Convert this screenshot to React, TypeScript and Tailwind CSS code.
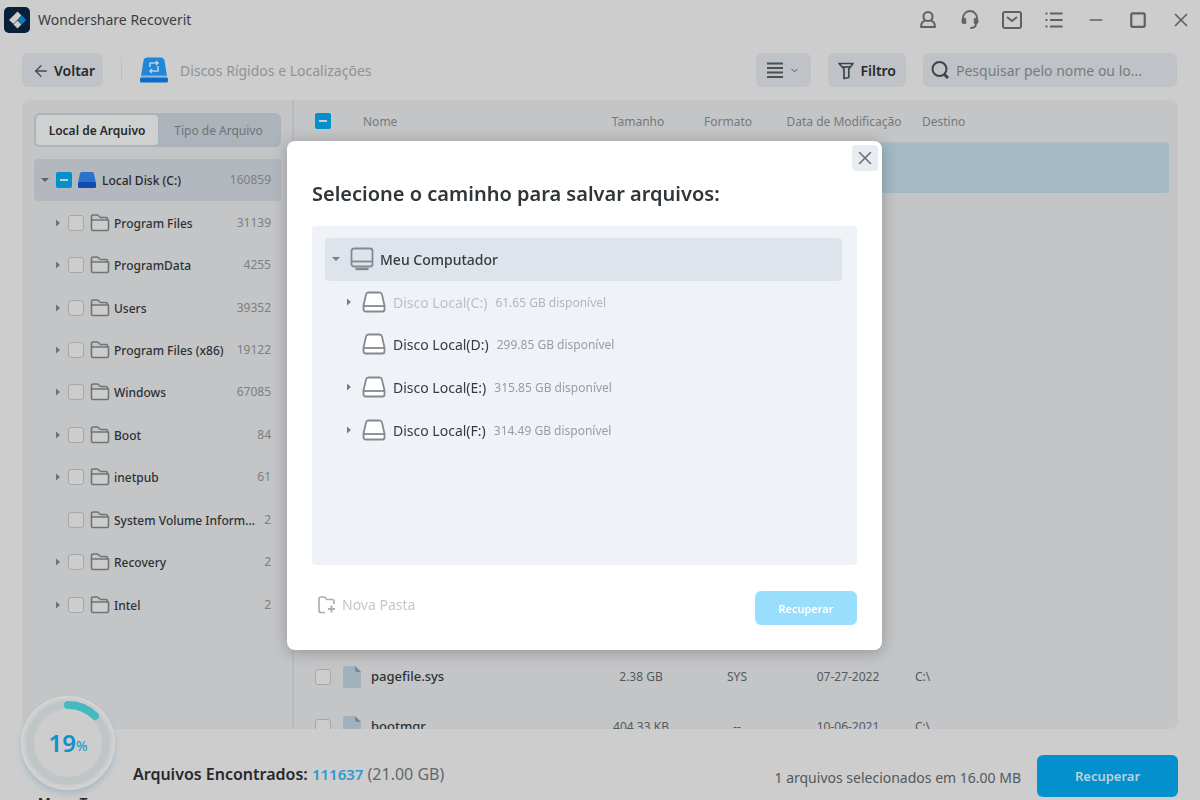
import React from 'react';
import { ArrowLeft, ChevronDown, Minus, Square, X } from 'lucide-react';

const folders = [
  { name: 'Program Files', count: 31139, expandable: true },
  { name: 'ProgramData', count: 4255, expandable: true },
  { name: 'Users', count: 39352, expandable: true },
  { name: 'Program Files (x86)', count: 19122, expandable: true },
  { name: 'Windows', count: 67085, expandable: true },
  { name: 'Boot', count: 84, expandable: true },
  { name: 'inetpub', count: 61, expandable: true },
  { name: 'System Volume Inform...', count: 2, expandable: false },
  { name: 'Recovery', count: 2, expandable: true },
  { name: 'Intel', count: 2, expandable: true },
];

const files = [
  { name: 'pagefile.sys', size: '2.38 GB', format: 'SYS', date: '07-27-2022', path: 'C:\\' },
  { name: 'bootmgr', size: '404.33 KB', format: '--', date: '10-06-2021', path: 'C:\\' },
];

const disks = [
  { name: 'Disco Local(C:)', free: '61.65 GB disponível', expandable: true, disabled: true },
  { name: 'Disco Local(D:)', free: '299.85 GB disponível', expandable: false, disabled: false },
  { name: 'Disco Local(E:)', free: '315.85 GB disponível', expandable: true, disabled: false },
  { name: 'Disco Local(F:)', free: '314.49 GB disponível', expandable: true, disabled: false },
];

const Logo = () => (
  <svg className="h-[26px] w-[26px]" viewBox="0 0 26 26">
    <rect width="26" height="26" rx="5" fill="#08203a" />
    <path d="M13.500 4.500L17.500 8.500 9.500 17 5 13z" fill="#cdcdcd" />
    <path d="M13.500 13.500l4 4-4 4-4-4z" fill="#cdcdcd" />
    <path d="M18 8.500l4 4.500-4 4.500-4-4.500z" fill="#0a7fc0" />
  </svg>
);

const RecoveryDisk = () => (
  <svg className="h-[26px] w-7" viewBox="0 0 28 26">
    <path d="M7 .5h14a3.500 3.500 0 0 1 3.400 2.600L27 19H1L3.600 3.100A3.500 3.500 0 0 1 7 .5z" fill="#1f86d8" />
    <path d="M.8 18.500h26.400v2H.8z" fill="#8fb9d6" />
    <rect y="20.500" width="28" height="5" rx="1.500" fill="#0a6ccc" />
    <path d="M10 10V6h7M18 9v5h-7M16 4l2 2-2 2M12 12l-2 2 2 2" fill="none" stroke="#b5d3e6" strokeWidth="1.600" />
  </svg>
);

const Caret = ({ open = false, className = '' }: { open?: boolean; className?: string }) => (
  <svg className={`h-2 w-2 shrink-0 ${className}`} viewBox="0 0 8 8" fill="currentColor">
    {open ? <path d="M0 2h8L4 6z" /> : <path d="M2 0.500L6 4 2 7.500z" />}
  </svg>
);

const Folder = () => (
  <svg className="h-[18px] w-5 shrink-0" viewBox="0 0 20 18" fill="none" stroke="#6f7476" strokeWidth="1.600" strokeLinejoin="round">
    <path d="M1.500 6v9a1.500 1.500 0 0 0 1.500 1.500h14a1.500 1.500 0 0 0 1.500-1.500V6z" fill="#cdcdcd" />
    <path d="M1.500 6.500V2.500A1.500 1.500 0 0 1 3 1h4.500l3 2.500H16A1.500 1.500 0 0 1 17.500 5v1" />
  </svg>
);

const Drive = () => (
  <svg className="h-[22px] w-6 shrink-0" viewBox="0 0 24 22" fill="none" stroke="#83898e" strokeWidth="1.800" strokeLinejoin="round">
    <path d="M6.500 1.500h11a2.500 2.500 0 0 1 2.400 1.900L22.500 14.500v4a2 2 0 0 1-2 2h-17a2 2 0 0 1-2-2v-4L4.100 3.400A2.500 2.500 0 0 1 6.500 1.500z" fill="#fff" />
    <path d="M1.500 15h21" />
  </svg>
);

const Monitor = () => (
  <svg className="h-6 w-6 shrink-0" viewBox="0 0 24 24" fill="none" stroke="#83898e" strokeWidth="1.800">
    <rect x="1.500" y="1.500" width="21" height="18" rx="2.500" />
    <path d="M2 14.500h20" />
    <path d="M5.500 22h13" strokeWidth="2.400" />
  </svg>
);

const FileIcon = () => (
  <svg className="h-[22px] w-[18px] shrink-0" viewBox="0 0 18 22">
    <path d="M2 0h10l6 6v14a2 2 0 0 1-2 2H2a2 2 0 0 1-2-2V2a2 2 0 0 1 2-2z" fill="#a2b2bd" />
    <path d="M12 0l6 6h-4a2 2 0 0 1-2-2z" fill="#74899a" />
  </svg>
);

const box =
  'block size-4 shrink-0 appearance-none rounded-[3px] border border-[#a5a8aa] bg-[#cdcdcd]';

// checkbox in the "partly selected" state
const PartialBox = ({ label }: { label: string }) => (
  <span className="relative block size-4 shrink-0">
    <input type="checkbox" aria-label={label} className="block size-4 appearance-none rounded-[2px] bg-[#0390cc]" />
    <span className="pointer-events-none absolute top-[7px] left-1 h-0.5 w-2 bg-[#cdcdcd]" />
  </span>
);

const TitleBar = () => (
  <header className="flex h-10 shrink-0 items-center justify-between pr-2 pl-1">
    <div className="flex items-center gap-2">
      <Logo />
      <h1 className="text-sm text-[#3c3f41]">Wondershare Recoverit</h1>
    </div>
    <nav className="flex items-center gap-[22px] text-[#5d6365]">
      <button aria-label="Conta" className="size-5">
        <svg viewBox="0 0 20 20" fill="none" stroke="currentColor" strokeWidth="2" strokeLinejoin="round">
          <circle cx="10" cy="6.500" r="4.500" />
          <path d="M7 10.500c-2.500 1-4 3-4 6.500h14c0-3.500-1.500-5.500-4-6.500" />
        </svg>
      </button>
      <button aria-label="Suporte" className="size-5">
        <svg viewBox="0 0 20 20" fill="none" stroke="currentColor" strokeWidth="1.900" strokeLinecap="round">
          <path d="M3 9V8a7 7 0 0 1 14 0v1" />
          <path d="M3.500 8.500h2.300v5H3.500A1.500 1.500 0 0 1 2 12v-2a1.500 1.500 0 0 1 1.500-1.500zM16.500 8.500h-2.300v5h2.300A1.500 1.500 0 0 0 18 12v-2a1.500 1.500 0 0 0-1.500-1.500z" fill="currentColor" strokeWidth="0.800" />
          <path d="M16 13.500c0 3-2 4.500-5 4.500" />
        </svg>
      </button>
      <button aria-label="Mensagens" className="size-5">
        <svg viewBox="0 0 20 20" fill="none" stroke="currentColor" strokeWidth="2">
          <rect x="1" y="2" width="18" height="16" rx="2" />
          <path d="M5 7l5 4 5-4" />
        </svg>
      </button>
      <button aria-label="Menu" className="size-5">
        <svg viewBox="0 0 20 20" fill="none" stroke="currentColor" strokeWidth="2">
          <path d="M6 3.500h12.500M6 10h12.500M6 16.500h12.500M1.500 3.500h2M1.500 10h2M1.500 16.500h2" />
        </svg>
      </button>
      <button aria-label="Minimizar" className="flex size-5 items-center justify-center"><Minus size={22} strokeWidth={2} /></button>
      <button aria-label="Maximizar" className="flex size-5 items-center justify-center"><Square size={18} strokeWidth={3} /></button>
      <button aria-label="Fechar"><X size={22} strokeWidth={1.9} /></button>
    </nav>
  </header>
);

const Toolbar = () => (
  <div className="mt-[13px] flex h-[34px] shrink-0 items-center pr-[23px] pl-[22px]">
    <button className="flex h-full items-center gap-1 rounded-md bg-[#bfc3c7] pt-0.5 pr-2 pl-2.5 text-sm font-semibold text-[#26292b]">
      <ArrowLeft size={18} strokeWidth={1.7} className="text-[#444a4d]" />
      Voltar
    </button>
    <div className="mx-[18px] h-6 w-px bg-[#bdbfc1]" />
    <RecoveryDisk />
    <span className="ml-3 pt-0.5 text-sm text-[#8f9395]">Discos Rígidos e Localizações</span>
    <button aria-label="Modo de exibição" className="ml-auto flex h-full items-center gap-1.5 rounded-md bg-[#bfc3c7] px-[11px] text-[#4b5052]">
      <svg className="h-4 w-4" viewBox="0 0 16 16" stroke="currentColor" strokeWidth="1.800">
        <path d="M0 1.500h16M0 6h16M0 10.500h16M0 15h16" />
      </svg>
      <ChevronDown size={11} />
    </button>
    <button className="ml-[17px] flex h-full items-center gap-1.5 rounded-md bg-[#bfc3c7] px-2.5 pt-0.5 text-sm font-semibold text-[#26292b]">
      <svg className="h-[18px] w-4" viewBox="0 0 16 18" fill="none" stroke="#3f4547" strokeWidth="1.700" strokeLinejoin="round">
        <path d="M1 1.500h14l-4.200 5.500v8.500l-4.800 1V7z" />
        <path d="M4 5h8" />
      </svg>
      Filtro
    </button>
    <label className="ml-[17px] flex h-full w-[254px] items-center gap-[7px] rounded-md bg-[#bfc3c7] px-2">
      <svg className="h-[18px] w-[18px] shrink-0" viewBox="0 0 18 18" fill="none" stroke="#3f4547" strokeWidth="2">
        <circle cx="8.500" cy="8" r="7" />
        <path d="M13.500 13.500l3.500 3.500" strokeWidth="3" />
      </svg>
      <input
        aria-label="Pesquisar"
        placeholder="Pesquisar pelo nome ou lo..."
        className="w-full bg-transparent pt-0.5 text-sm outline-none placeholder:text-[#777b7d]"
      />
    </label>
  </div>
);

const Sidebar = () => (
  <aside className="w-[272px] shrink-0 border-r-2 border-[#b8babd] pt-[13px] pr-[11px] pl-3">
    <div className="flex h-[34px] rounded-md bg-[#adb3bb] p-0.5 text-xs">
      <button className="w-[122px] rounded bg-[#cfd0d0] pt-0.5 font-semibold text-[#26292b]">Local de Arquivo</button>
      <button className="flex-1 pt-0.5 text-[#6d7377]">Tipo de Arquivo</button>
    </div>
    <ul className="mt-3 grid h-[467px] auto-rows-fr grid-cols-1 text-xs">
      <li className="flex items-center rounded bg-[#b3b8bf] pr-2.5 pl-[7px]">
        <Caret open className="mr-[7px] text-[#5d6365]" />
        <PartialBox label="Local Disk (C:)" />
        <svg className="mx-1.5 h-4 w-[18px]" viewBox="0 0 18 16">
          <path d="M4 0h10a2 2 0 0 1 2 1.600L18 11H0L2 1.600A2 2 0 0 1 4 0z" fill="#2b72cb" />
          <rect y="10" width="18" height="6" rx="1.500" fill="#124bb0" />
        </svg>
        <span className="pt-0.5 font-medium text-[#26292b]">Local Disk (C:)</span>
        <span className="ml-auto text-[#7b8083]">160859</span>
      </li>
      {folders.map((folder) => (
        <li key={folder.name} className="flex items-center pr-2.5 pl-5">
          <Caret className={folder.expandable ? 'mr-1.5 text-[#6d7274]' : 'invisible mr-1.5'} />
          <input type="checkbox" aria-label={folder.name} className={box} />
          <span className="mr-1 ml-1.5">
            <Folder />
          </span>
          <span className="pt-0.5 font-medium whitespace-nowrap text-[#2e3133]">{folder.name}</span>
          <span className="ml-auto text-[#7b8083]">{folder.count}</span>
        </li>
      ))}
    </ul>
  </aside>
);

const FileTable = () => (
  <div className="min-w-0 flex-1 overflow-hidden pr-[9px]">
    <table className="w-full table-fixed border-collapse text-xs">
      <colgroup>
        <col className="w-[69px]" />
        <col className="w-[230px]" />
        <col className="w-[90px]" />
        <col className="w-[90px]" />
        <col className="w-[142px]" />
        <col />
      </colgroup>
      <thead>
        <tr className="h-[42px] border-b border-[#b9bbbd] text-[#75797b]">
          <th className="pl-[21px]"><PartialBox label="Selecionar tudo" /></th>
          <th className="pt-0.5 text-left font-normal">Nome</th>
          <th className="pt-0.5 font-normal">Tamanho</th>
          <th className="pt-0.5 font-normal">Formato</th>
          <th className="pt-0.5 font-normal whitespace-nowrap">Data de Modificação</th>
          <th className="pt-0.5 pl-[7px] text-left font-normal">Destino</th>
        </tr>
      </thead>
      <tbody className="text-[#54595c]">
        <tr className="h-[51px]">
          <td colSpan={6} className="rounded bg-[#a3bac5]" />
        </tr>
        <tr className="h-[459px]">
          <td colSpan={6} />
        </tr>
        {files.map((file) => (
          <tr key={file.name} className="h-[50px]">
            <td className="pl-[21px]">
              <input type="checkbox" aria-label={file.name} className={box} />
            </td>
            <td>
              <div className="-ml-5 flex items-center gap-2.5 text-[13px] font-medium text-[#2e3133]">
                <FileIcon />
                {file.name}
              </div>
            </td>
            <td className="pl-1.5 text-center">{file.size}</td>
            <td className="pl-[18px] text-center">{file.format}</td>
            <td className="pl-2 text-center">{file.date}</td>
            <td>{file.path}</td>
          </tr>
        ))}
      </tbody>
    </table>
  </div>
);

const StatusBar = () => (
  <footer className="flex h-[71px] shrink-0 items-center pr-[22px] pl-[133px]">
    <div className="absolute bottom-[-11px] left-[21px] flex w-[94px] flex-col items-center gap-[5px]">
      <div className="relative flex size-[94px] items-center justify-center rounded-full border-2 border-[#d3d4d4] bg-[#cdcdcd] shadow-[0_4px_6px_#a9bac6]">
        <svg className="absolute inset-0 size-full" viewBox="0 0 90 90" fill="none">
          <circle cx="45" cy="45" r="38" stroke="#c0c5c8" strokeWidth="8" />
          <path d="M45 7a38 38 0 0 1 27 11" stroke="#43babf" strokeWidth="8" strokeLinecap="round" />
        </svg>
        <span className="text-2xl font-semibold text-[#1490c8]">19</span>
        <span className="mt-1.5 text-sm text-[#1490c8]">%</span>
      </div>
      <span className="text-sm leading-4 font-semibold whitespace-nowrap text-[#26292b]">Mapa T...</span>
    </div>
    <p className="mt-[18px] text-base text-[#63686b]">
      <strong className="font-semibold text-[#26292b]">Arquivos Encontrados:</strong>{' '}
      <strong className="text-[15px] font-semibold text-[#2a9ccf]">111637</strong> (21.00 GB)
    </p>
    <p className="mt-[26px] ml-auto text-sm text-[#53585b]">1 arquivos selecionados em 16.00 MB</p>
    <button className="mt-[22px] ml-4 h-[42px] w-[141px] rounded-md bg-[#0390cc] pt-0.5 text-[13px] font-semibold text-[#bcd3de]">Recuperar</button>
  </footer>
);

const SaveDialog = () => (
  <div className="fixed inset-0 flex items-center justify-center pr-[31px] pb-[9px]">
    <section role="dialog" aria-labelledby="save-title" className="w-[595px] rounded-lg bg-white px-[25px] pb-[25px] shadow-[0_2px_16px_rgba(0,0,0,0.25)]">
      <div className="-mr-[21px] flex justify-end pt-1">
        <button aria-label="Fechar" className="flex size-[26px] items-center justify-center rounded bg-[#e6ecf1] text-[#6a7074]">
          <X size={22} strokeWidth={1.7} />
        </button>
      </div>
      <h2 id="save-title" className="mt-[9px] text-xl leading-7 font-semibold text-[#2f3539]">
        Selecione o caminho para salvar arquivos:
      </h2>
      <div className="mt-[18px] min-h-[339px] rounded bg-[#eff3f7] pt-3 pr-[15px] pl-[13px]">
        <ul className="grid h-[213px] auto-rows-fr">
          <li className="flex items-center rounded bg-[#dde4ec] pl-[7px] text-sm text-[#363b3f]">
            <Caret open className="mr-2.5 text-[#777d82]" />
            <Monitor />
            <span className="ml-1.5 pt-0.5 font-medium">Meu Computador</span>
          </li>
          {disks.map((disk) => (
            <li key={disk.name} className="flex items-center pl-5">
              <Caret className={disk.expandable ? 'mr-[9px] text-[#777d82]' : 'invisible mr-[9px]'} />
              <Drive />
              <span className={disk.disabled ? 'ml-[7px] pt-0.5 text-sm text-[#bcc1c5]' : 'ml-[7px] pt-0.5 text-sm text-[#363b3f]'}>{disk.name}</span>
              <span className={disk.disabled ? 'ml-2 pt-0.5 text-xs text-[#b2b7bb]' : 'ml-2 pt-0.5 text-xs text-[#989da1]'}>{disk.free}</span>
            </li>
          ))}
        </ul>
      </div>
      <div className="mt-[26px] flex items-center justify-between">
        <button className="mb-1.5 flex items-center gap-1.5 pl-1.5 text-sm text-[#c3c7cb]">
          <svg className="h-[18px] w-[18px]" viewBox="0 0 18 18" fill="none" stroke="#a9aeb0" strokeWidth="1.700" strokeLinejoin="round">
            <path d="M7 16.500H3a2 2 0 0 1-2-2V3a2 2 0 0 1 2-2h3.500L9 3.500h5a2 2 0 0 1 2 2V8" />
            <path d="M13.500 9.500v7M10 13h7" strokeWidth="2" />
          </svg>
          Nova Pasta
        </button>
        <button className="h-[34px] w-[102px] rounded-md bg-[#99defc] pt-0.5 text-[11px] font-semibold text-white">Recuperar</button>
      </div>
    </section>
  </div>
);

export default function App() {
  return (
    <div className="relative flex h-screen flex-col overflow-hidden bg-[#cdcdcd] font-['Noto_Sans',sans-serif]">
      <TitleBar />
      <Toolbar />
      <main className="mt-[13px] mr-[22px] ml-[22px] flex min-h-0 flex-1 overflow-hidden rounded-lg bg-[#c4c5c7]">
        <Sidebar />
        <FileTable />
      </main>
      <StatusBar />
      <SaveDialog />
    </div>
  );
}
